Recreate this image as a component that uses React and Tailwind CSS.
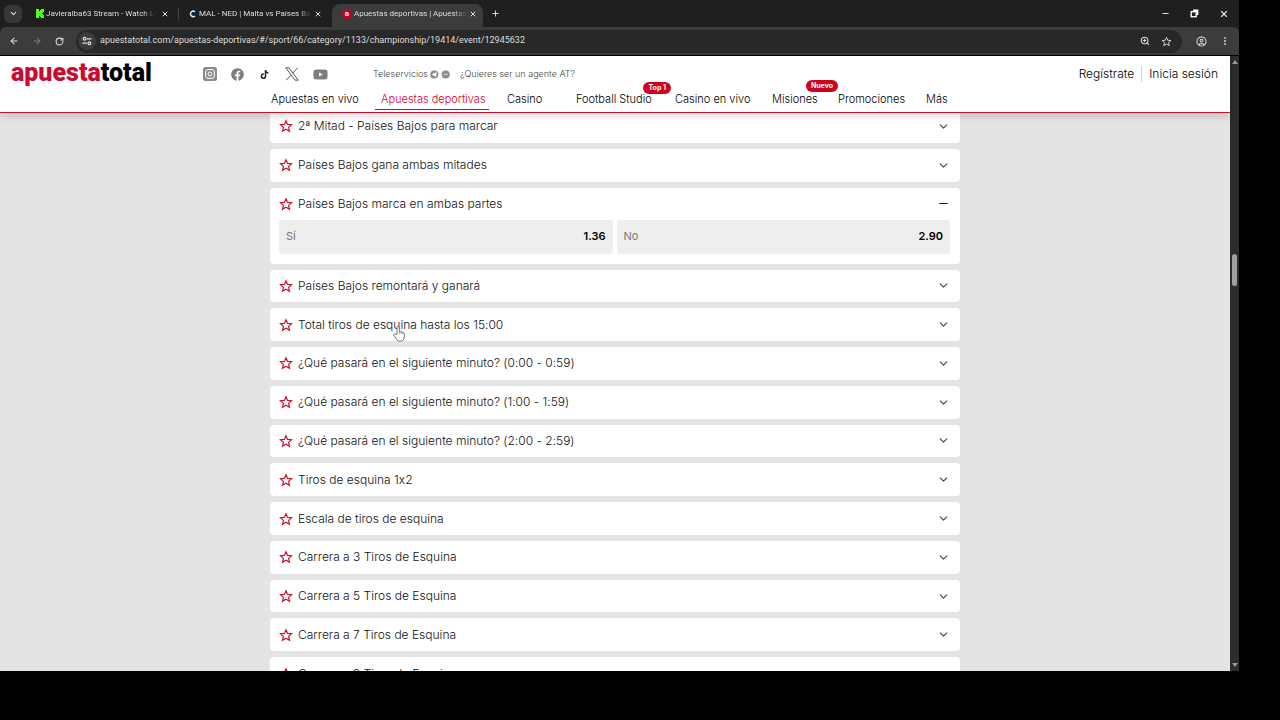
import React, { useState } from "react";
import { ArrowLeft, ArrowRight, ChevronDown, Minus, Plus, RotateCw, X, ZoomIn, CircleUser, MoreVertical } from "lucide-react";
import { FaFacebook, FaTiktok, FaYoutube } from "react-icons/fa";

const tabs = [
  { title: "Javieralba63 Stream - Watch Li", icon: "kick", divider: true },
  { title: "MAL - NED | Malta vs Países Ba", icon: "score" },
  { title: "Apuestas deportivas | Apuestas", icon: "apuesta", active: true },
];

const navItems = [
  { label: "Apuestas en vivo", width: "w-[86px]" },
  { label: "Apuestas deportivas", width: "w-[102px]", active: true },
  { label: "Casino", width: "w-[45px]" },
  { label: "Football Studio", width: "w-[75px]", badge: "Top 1", badgePos: "-right-5 -top-2.5" },
  { label: "Casino en vivo", width: "w-[73px]" },
  { label: "Misiones", width: "w-[42px]", badge: "Nuevo", badgePos: "-right-6 -top-3" },
  { label: "Promociones", width: "w-16" },
  { label: "Más", width: "w-5" },
];

const markets = [
  { name: "2ª Mitad - Países Bajos para marcar" },
  { name: "Países Bajos gana ambas mitades" },
  {
    name: "Países Bajos marca en ambas partes",
    odds: [
      { label: "Sí", value: "1.36" },
      { label: "No", value: "2.90" },
    ],
  },
  { name: "Países Bajos remontará y ganará" },
  { name: "Total tiros de esquina hasta los 15:00", hovered: true },
  { name: "¿Qué pasará en el siguiente minuto? (0:00 - 0:59)" },
  { name: "¿Qué pasará en el siguiente minuto? (1:00 - 1:59)" },
  { name: "¿Qué pasará en el siguiente minuto? (2:00 - 2:59)" },
  { name: "Tiros de esquina 1x2" },
  { name: "Escala de tiros de esquina" },
  { name: "Carrera a 3 Tiros de Esquina" },
  { name: "Carrera a 5 Tiros de Esquina" },
  { name: "Carrera a 7 Tiros de Esquina" },
  { name: "Carrera a 9 Tiros de Esquina" },
];

function StarIcon({ className }) {
  return (
    <svg viewBox="0 0 24 24" className={`${className} fill-none stroke-current`} strokeWidth="2" strokeLinejoin="miter">
      <path d="M12 3l2.700 6.300 6.900.6-5.200 4.500 1.600 6.700L12 17.500 6 21.100l1.600-6.700L2.400 9.900l6.900-.6z" />
    </svg>
  );
}

function TabIcon({ name }) {
  if (name === "kick") {
    return (
      <svg viewBox="0 0 8 9" className="h-[9px] w-2 shrink-0 fill-[#53fc18]">
        <path d="M0 0h3v2h1V1h1V0h3v3H7v1H6v1h1v1h1v3H5V8H4V7H3v2H0z" />
      </svg>
    );
  }
  if (name === "score") {
    return (
      <svg viewBox="0 0 8 8" className="size-2 shrink-0">
        <circle cx="4" cy="4" r="4" fill="#0b2630" />
        <path d="M6 1.8A2.7 2.7 0 1 0 6 6" fill="none" stroke="#e8eef0" strokeWidth="1.4" />
      </svg>
    );
  }
  return (
    <span className="flex h-2.5 w-2.5 shrink-0 items-center justify-center rounded-full bg-[#c8002a] text-[8px] leading-none font-bold text-white">
      a
    </span>
  );
}

function BrowserBar() {
  return (
    <div className="shrink-0 bg-[#1f1f1f] font-[Roboto,sans-serif] text-[#dedede]">
      <div className="flex h-[27px] items-center">
        <button aria-label="Buscar pestañas" className="ml-1 flex size-[18px] items-center justify-center rounded-md bg-[#373737]">
          <ChevronDown size={9} strokeWidth={3} />
        </button>
        <div className="ml-1 flex h-full items-end">
          {tabs.map((tab) => (
            <div
              key={tab.title}
              className={
                tab.active
                  ? "flex h-[23px] w-[151px] items-center rounded-t-lg bg-[#3c3c3c] pr-1.5 pb-1 pl-2.5"
                  : "relative flex h-[23px] w-[153px] items-center px-2.5 pb-1"
              }
            >
              <TabIcon name={tab.icon} />
              <span className="ml-0.5 text-[8px] whitespace-nowrap [mask-image:linear-gradient(to_right,black_88%,transparent)]">
                {tab.title}
              </span>
              <button aria-label="Cerrar pestaña" className="ml-auto">
                <X size={8} strokeWidth={3} />
              </button>
              {tab.divider && <span className="absolute top-1 right-0 h-3 w-px bg-[#444]" />}
            </div>
          ))}
        </div>
        <button aria-label="Nueva pestaña" className="ml-2">
          <Plus size={9} strokeWidth={2.5} />
        </button>
        <div className="mr-2.5 ml-auto flex items-center gap-5">
          <button aria-label="Minimizar">
            <Minus size={9} strokeWidth={3} />
          </button>
          <button aria-label="Restaurar">
            <svg viewBox="0 0 9 9" className="size-[9px] fill-none stroke-white" strokeWidth="1.4">
              <rect x="1.2" y="2.7" width="5" height="5" />
              <path d="M3 1.3h4.7V6" />
            </svg>
          </button>
          <button aria-label="Cerrar">
            <X size={10} strokeWidth={2.8} />
          </button>
        </div>
      </div>
      <div className="flex h-[29px] items-center rounded-t-md border-b border-black bg-[#3c3c3c] px-[9px]">
        <div className="flex gap-[13px]">
          <button aria-label="Atrás">
            <ArrowLeft size={10} strokeWidth={2.5} />
          </button>
          <button aria-label="Adelante" className="text-[#7c7c7c]">
            <ArrowRight size={10} strokeWidth={2.5} />
          </button>
          <button aria-label="Recargar">
            <RotateCw size={9} strokeWidth={2.8} />
          </button>
        </div>
        <div className="ml-3 flex h-[23px] flex-1 items-center rounded-full bg-[#282828] pr-2.5 pl-0.5">
          <button aria-label="Información del sitio" className="flex size-[18px] items-center justify-center rounded-full bg-[#3c3c3c]">
            <svg viewBox="0 0 10 10" className="size-2.5 fill-none stroke-current" strokeWidth="1.2">
              <circle cx="2.6" cy="2.8" r="1.4" />
              <path d="M5 2.8h4.5M.5 7.2H5" />
              <circle cx="7.4" cy="7.2" r="1.4" />
            </svg>
          </button>
          <input
            aria-label="Dirección"
            className="ml-1 min-w-0 flex-1 bg-transparent text-[9px] outline-none"
            defaultValue="apuestatotal.com/apuestas-deportivas/#/sport/66/category/1133/championship/19414/event/12945632"
          />
          <div className="flex gap-[11px]">
            <ZoomIn size={10} strokeWidth={2.5} />
            <StarIcon className="size-[11px]" />
          </div>
        </div>
        <div className="ml-3.5 flex items-center gap-[13px]">
          <CircleUser size={11} strokeWidth={2.2} />
          <MoreVertical size={10} strokeWidth={2.5} />
        </div>
      </div>
    </div>
  );
}

function SiteHeader() {
  return (
    <header className="z-10 flex h-[57px] shrink-0 flex-col border-b border-[#c8102e] bg-white font-light text-black shadow-[0_3px_8px_rgba(0,0,0,0.16)]">
      <div className="flex h-9 items-center pr-3 pl-[11px]">
        <a href="#inicio" className="w-48 pb-0.5 font-[Roboto] text-[25px] leading-8 font-black text-black">
          <span className="text-[#cb0a32]">apuesta</span>total
        </a>
        <div className="flex items-center gap-3.5 text-[#7d7d7d]">
          <a href="#instagram" aria-label="Instagram">
            <svg viewBox="0 0 14 14" className="size-3.5">
              <rect width="14" height="14" rx="2.5" fill="#8a8a8a" />
              <rect x="2.6" y="2.6" width="8.8" height="8.8" rx="2.4" fill="none" stroke="#fff" strokeWidth="1" />
              <circle cx="7" cy="7" r="2" fill="none" stroke="#fff" strokeWidth="1" />
            </svg>
          </a>
          <a href="#facebook" aria-label="Facebook">
            <FaFacebook size={13} />
          </a>
          <a href="#tiktok" aria-label="TikTok" className="flex w-[13px] justify-center text-[#222]">
            <FaTiktok size={9} />
          </a>
          <a href="#x" aria-label="X">
            <svg viewBox="0 0 14 14" className="size-3.5 fill-none stroke-[#555]" strokeWidth="1">
              <path d="M.8.8h3.1l9.300 12.400h-3.100zM12.600.8 7.700 6.200M6 8.200l-4.800 5" />
            </svg>
          </a>
          <a href="#youtube" aria-label="YouTube">
            <FaYoutube size={15} />
          </a>
        </div>
        <div className="ml-[45px] flex items-center text-[9px] text-[#444]">
          <a href="#teleservicios">Teleservicios</a>
          <svg viewBox="0 0 21 9" className="mr-2.5 ml-0.5 h-[9px] w-5">
            <circle cx="4.5" cy="4.5" r="4.3" fill="#8d8d8d" />
            <circle cx="16.5" cy="4.5" r="4.3" fill="#8d8d8d" />
            <path d="m2 4.400 4.800-2-.8 4.400-1.700-1.200zM14 5.600l2-2 1.200 1.300 2-1.500" fill="#fff" stroke="#fff" strokeWidth=".4" />
          </svg>
          <a href="#agente">¿Quieres ser un agente AT?</a>
        </div>
        <div className="ml-auto flex items-center text-xs">
          <a href="#registro" className="border-r border-gray-300 pr-[7px]">Regístrate</a>
          <a href="#login" className="pl-[7px]">Inicia sesión</a>
        </div>
      </div>
      <nav className="flex flex-1 gap-6 pl-[271px] text-[11px] whitespace-nowrap">
        {navItems.map((item) => (
          <a
            key={item.label}
            href="#nav"
            className={`${item.width} ${item.active ? "text-[#d6002f]" : ""} relative flex shrink-0 items-start leading-[14px]`}
          >
            {item.label}
            {item.active && <span className="absolute -inset-x-1.5 bottom-0.5 h-px bg-[#d6002f]" />}
            {item.badge && (
              <span className={`${item.badgePos} absolute rounded-md bg-[#d0021b] px-[5px] text-[7px] leading-3 font-bold text-white`}>
                {item.badge}
              </span>
            )}
          </a>
        ))}
      </nav>
    </header>
  );
}

function HandCursor() {
  return (
    <svg viewBox="0 0 12 17" className="pointer-events-none absolute top-0 left-[100px] h-[17px] w-3">
      <path
        d="M4 9.500V2a1.200 1.200 0 0 1 2.300 0v4.400c.8-.5 1.600-.2 1.800.5.8-.4 1.500 0 1.700.7.8-.2 1.500.2 1.500 1.100v3.100c0 2.600-1.500 4.400-4.200 4.400-2.200 0-3.200-1-4-2.500L.9 10.200c-.5-1 .6-1.900 1.500-1.100z"
        fill="#fff"
        stroke="#555"
        strokeWidth=".8"
      />
      <path d="M6.300 6.500V9M8.100 7v2M9.800 7.700V9" stroke="#555" strokeWidth=".6" />
    </svg>
  );
}

function MarketCard({ market, open, onToggle }) {
  return (
    <section className={`rounded bg-white pr-2.5 pl-[9px] ${open ? "shrink-0 pb-2.5" : "flex min-h-8 flex-1 flex-col justify-center"}`}>
      <div className="flex h-8 items-center">
        <button aria-label="Favorito" className="text-[#c8102e]">
          <StarIcon className="size-[14px]" />
        </button>
        <button
          aria-expanded={open}
          onClick={onToggle}
          className="relative flex h-full flex-1 items-center justify-between pl-[5px] text-left text-xs font-light text-[#111]"
        >
          {market.name}
          {open ? <Minus size={13} strokeWidth={1.8} /> : <ChevronDown size={13} strokeWidth={2} className="text-[#444]" />}
          {market.hovered && (
            <span className="absolute inset-x-0 top-full">
              <span className="relative -top-4 block">
                <HandCursor />
              </span>
            </span>
          )}
        </button>
      </div>
      {open && market.odds && (
        <div className="grid grid-cols-2 gap-1">
          {market.odds.map((odd) => (
            <button key={odd.label} className="flex h-[34px] items-center justify-between rounded-xs bg-[#eee] px-[7px] text-[11px]">
              <span className="text-[#777]">{odd.label}</span>
              <span className="font-semibold text-black">{odd.value}</span>
            </button>
          ))}
        </div>
      )}
    </section>
  );
}

function Scrollbar() {
  return (
    <div className="flex w-[9px] shrink-0 flex-col items-center bg-[#2c2c2c] py-1">
      <svg viewBox="0 0 6 4" className="h-1 w-1.5 fill-[#9a9a9a]">
        <path d="M3 0l3 4H0z" />
      </svg>
      <div className="flex w-[5px] flex-1 flex-col">
        <div className="grow-[189]" />
        <div className="h-8 rounded-full bg-[#9f9f9f]" />
        <div className="grow-[374]" />
      </div>
      <svg viewBox="0 0 6 4" className="h-1 w-1.5 fill-[#9a9a9a]">
        <path d="M0 0h6L3 4z" />
      </svg>
    </div>
  );
}

export default function App() {
  const [openMarket, setOpenMarket] = useState(2);

  return (
    <div className="h-screen bg-black pr-[41px] pb-[49px] font-[Inter,sans-serif] [font-feature-settings:'calt'_0]">
      <div className="flex h-full flex-col overflow-hidden">
        <BrowserBar />
        <div className="flex min-h-0 flex-1">
          <div className="flex min-w-0 flex-1 flex-col bg-[#e4e4e4]">
            <SiteHeader />
            <main className="flex min-h-0 flex-1 flex-col overflow-hidden">
              <div className="mx-auto -mt-[3px] -mb-[19px] flex w-full max-w-[690px] flex-1 flex-col gap-1.5">
                {markets.map((market, i) => (
                  <MarketCard
                    key={market.name}
                    market={market}
                    open={openMarket === i}
                    onToggle={() => setOpenMarket(openMarket === i ? null : i)}
                  />
                ))}
              </div>
            </main>
          </div>
          <Scrollbar />
        </div>
      </div>
    </div>
  );
}
